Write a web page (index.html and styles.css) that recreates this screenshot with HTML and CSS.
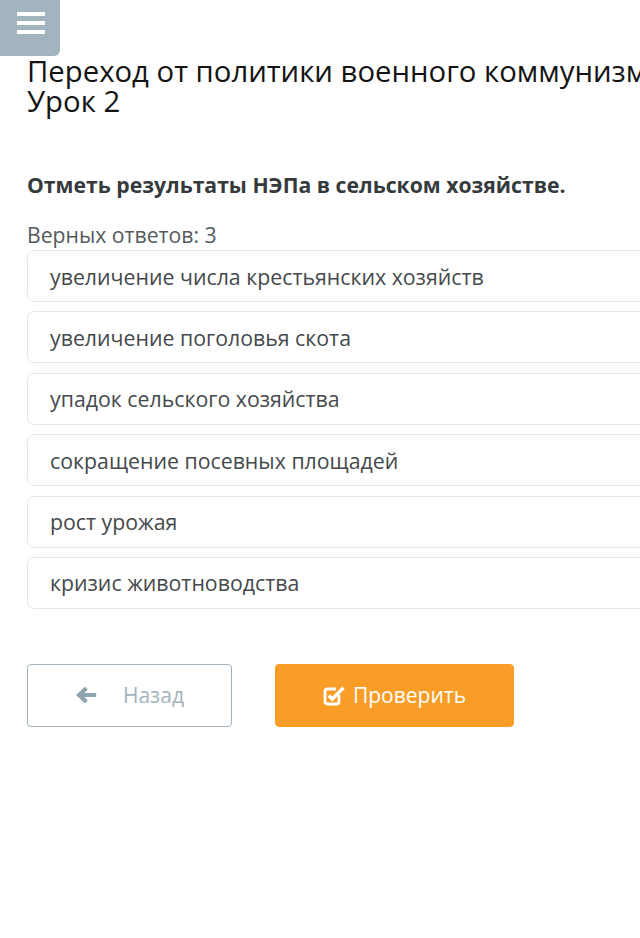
FILE: index.html
```html
<!DOCTYPE html>
<html lang="ru">
<head>
<meta charset="utf-8">
<title>Урок 2</title>
<link rel="stylesheet" href="styles.css">
</head>
<body>
<div class="page">
  <div class="menu-btn" aria-label="Меню">
    <span class="bar"></span><span class="bar"></span><span class="bar"></span>
  </div>
  <div class="content">
    <h1 class="title"><span class="line">Переход от политики военного коммунизма к НЭПу.</span><span class="line">Урок 2</span></h1>
    <p class="question">Отметь результаты НЭПа в сельском хозяйстве.</p>
    <p class="count">Верных ответов: 3</p>
    <div class="options">
      <div class="option">увеличение числа крестьянских хозяйств</div>
      <div class="option">увеличение поголовья скота</div>
      <div class="option">упадок сельского хозяйства</div>
      <div class="option">сокращение посевных площадей</div>
      <div class="option">рост урожая</div>
      <div class="option">кризис животноводства</div>
    </div>
    <div class="actions">
      <button class="btn btn-back">
        <svg class="ico-back" width="22" height="18" viewBox="0 0 22 18"><path d="M1 9 L9 1.5 Q10 0.6 11 1.5 L12 2.6 Q12.8 3.5 12 4.4 L9.5 7 H20 Q21.2 7 21.2 8.2 V9.8 Q21.2 11 20 11 H9.5 L12 13.6 Q12.8 14.5 12 15.4 L11 16.5 Q10 17.4 9 16.5 Z" fill="#8fa3af"/></svg>
        <span class="btn-text">Назад</span>
      </button>
      <button class="btn btn-check">
        <svg class="ico-check" width="23" height="21" viewBox="0 0 23 21"><path d="M16 10 V16.5 Q16 19 13.5 19 H4.5 Q2 19 2 16.5 V6.5 Q2 4 4.5 4 H13" fill="none" stroke="#fff" stroke-width="2.8"/><path d="M5.8 10.5 L9.4 14 L20.5 2.8" fill="none" stroke="#fff" stroke-width="3.4"/></svg>
        <span class="btn-text">Проверить</span>
      </button>
    </div>
  </div>
</div>
</body>
</html>
```

FILE: styles.css
```css
html, body {
  margin: 0;
  padding: 0;
  background: #ffffff;
  overflow: hidden;
}
body {
  width: 640px;
  height: 938px;
  font-family: "Open Sans", "Noto Sans", sans-serif;
}
.page {
  width: 640px;
  overflow: hidden;
}
.menu-btn {
  width: 60px;
  height: 56px;
  background: #a2b4be;
  border-bottom-right-radius: 6px;
  display: flex;
  flex-direction: column;
  align-items: flex-start;
  padding: 12px 0 0 17px;
  box-sizing: border-box;
  gap: 5px;
}
.bar {
  display: block;
  width: 28px;
  height: 4px;
  background: #ffffff;
}
.content {
  padding-left: 27px;
  width: 800px;
}
.title {
  margin: 0;
  font-weight: 400;
  font-size: 29.3px;
  line-height: 30px;
  color: #141414;
  white-space: nowrap;
}
.title .line {
  display: block;
}
.question {
  margin: 55px 0 0;
  font-weight: 700;
  font-size: 21.2px;
  line-height: 28px;
  color: #353a3d;
}
.count {
  margin: 22px 0 0;
  font-size: 21.2px;
  line-height: 28px;
  color: #555a5d;
}
.options {
  margin-top: 1px;
  display: flex;
  flex-direction: column;
  gap: 9.4px;
}
.option {
  height: 52px;
  box-sizing: border-box;
  border: 1px solid #e3e9e8;
  border-radius: 7px;
  padding: 0 22px;
  display: flex;
  align-items: center;
  font-size: 21.3px;
  color: #45494c;
  background: #fff;
}
.actions {
  margin-top: 55px;
  display: flex;
  gap: 43px;
}
.btn {
  height: 63px;
  box-sizing: border-box;
  border-radius: 4px;
  font-family: "Open Sans", "Noto Sans", sans-serif;
  font-size: 21px;
  display: flex;
  align-items: center;
  justify-content: center;
  padding: 0;
  cursor: pointer;
}
.btn-back {
  width: 205px;
  background: #ffffff;
  border: 1px solid #a4b3bb;
  color: #a3b3bd;
  gap: 26px;
}
.btn-check {
  width: 239px;
  background: #f99d27;
  border: 1px solid #f99d27;
  color: #ffffff;
  gap: 7px;
}
.ico-back, .ico-check {
  display: block;
}
```
